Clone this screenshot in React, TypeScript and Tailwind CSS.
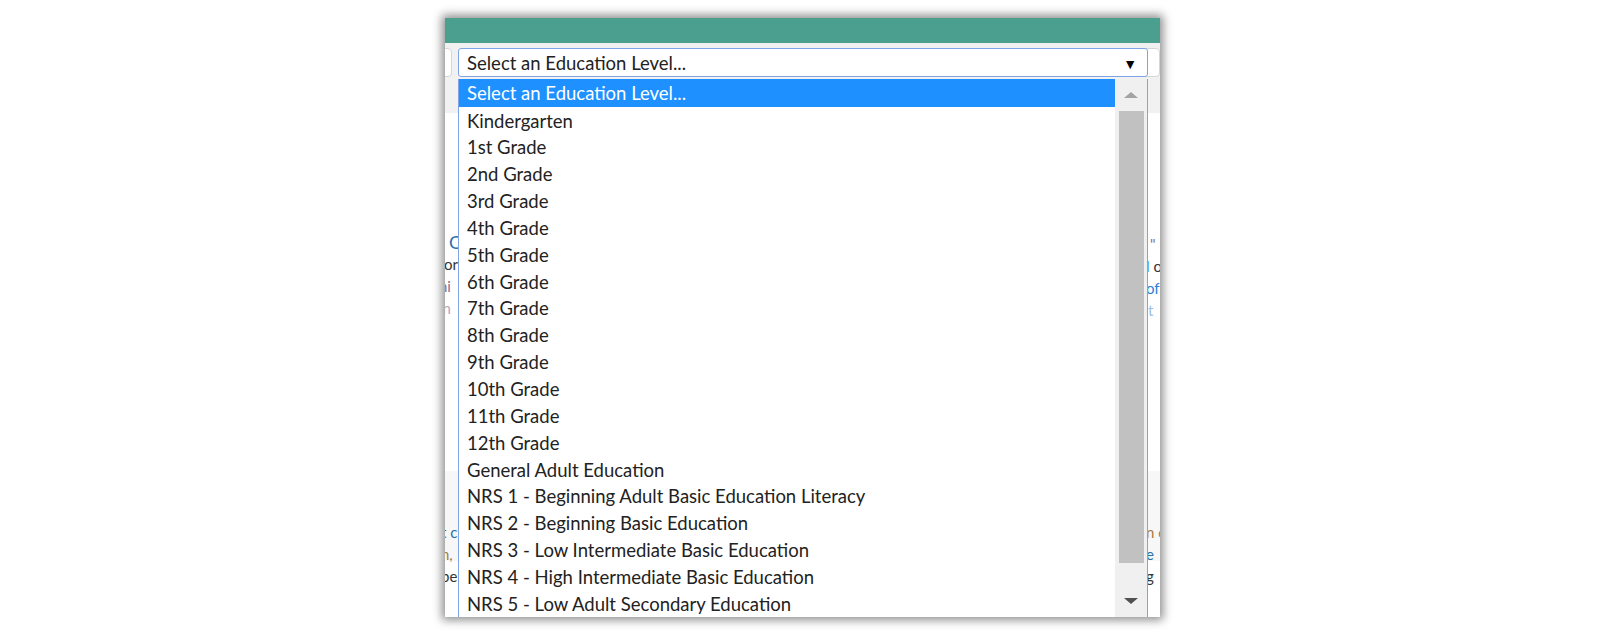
import React from 'react';

const levels = [
  'Kindergarten',
  '1st Grade',
  '2nd Grade',
  '3rd Grade',
  '4th Grade',
  '5th Grade',
  '6th Grade',
  '7th Grade',
  '8th Grade',
  '9th Grade',
  '10th Grade',
  '11th Grade',
  '12th Grade',
  'General Adult Education',
  'NRS 1 - Beginning Adult Basic Education Literacy',
  'NRS 2 - Beginning Basic Education',
  'NRS 3 - Low Intermediate Basic Education',
  'NRS 4 - High Intermediate Basic Education',
  'NRS 5 - Low Adult Secondary Education',
  'NRS 6 - High Adult Secondary Education',
];

export default function App() {
  return (
    <div className="w-[1611px] h-[633px] bg-white overflow-hidden font-['Lato','Open_Sans',sans-serif]">
      <div className="ml-[445px] pt-[18px]">
        <div className="relative w-[715px] h-[599px] bg-white overflow-hidden shadow-[0_0_9px_3px_rgba(0,0,0,0.45)]">
          {/* header */}
          <div className="h-[25px] bg-[#4a9f8f]" />

          {/* filter toolbar behind the dropdown */}
          <div className="h-[70px] bg-[#f1f1f1] pt-[5px] flex gap-[5px] -ml-[20px]">
            <div className="w-[28px] h-[29px] rounded-[4px] border border-[#d6d6d6] bg-white" />
            <div className="w-[690px] h-[29px]" />
            <div className="w-[40px] h-[29px] rounded-[4px] border border-[#d6d6d6] bg-white" />
          </div>

          {/* page text behind the dropdown */}
          <div className="flex justify-between text-[15px] leading-[22px] mt-[118px]">
            <div className="-ml-[6px] w-[20px] overflow-hidden whitespace-nowrap">
              <div className="text-[#2a6fa8] text-[18px] pl-[10px]">O</div>
              <div className="text-[#333]">for</div>
              <div className="text-[#8a6f8f]">hi</div>
              <div className="text-[#b9a5c0]">in</div>
            </div>
            <div className="w-[14px] overflow-hidden whitespace-nowrap pt-[2px]">
              <div className="text-[#8a6f8f] pl-[4px]">"</div>
              <div className="text-[#333]"><span className="text-[#2d7fd6]">l</span> o</div>
              <div className="text-[#2d7fd6]">of</div>
              <div className="text-[#9cc1e6] pl-[2px]">t</div>
            </div>
          </div>
          <div className="mt-[150px] h-[90px] bg-[#f7f7f7]" />
          <div className="flex justify-between text-[15px] leading-[22px] -mt-[40px]">
            <div className="-ml-[4px] w-[20px] overflow-hidden whitespace-nowrap">
              <div className="text-[#2a6fa8]">t c</div>
              <div className="text-[#a97a3d]">n,</div>
              <div className="text-[#333]">pe</div>
            </div>
            <div className="w-[14px] overflow-hidden whitespace-nowrap">
              <div className="text-[#a97a3d]">n c</div>
              <div className="text-[#2a6fa8]">e</div>
              <div className="text-[#333]">g</div>
            </div>
          </div>

          {/* select box */}
          <div className="absolute left-[13px] top-[30px] w-[690px] h-[29px] rounded-[3px] border border-[#7fa4e8] bg-white flex items-center justify-between pl-[8px] pr-[10px] pt-[2px] text-[18.5px] text-[#222]">
            <span>Select an Education Level...</span>
            <span className="text-[14px] text-black">▼</span>
          </div>

          {/* open list */}
          <div className="absolute left-[13px] top-[61px] w-[690px] h-[560px] bg-white border-x border-[#7fa4e8] flex">
            <div className="flex-1 overflow-hidden">
              <div className="h-[28px] pt-[2px] bg-[#1e90ff] text-white text-[18.5px] flex items-center pl-[8px]">
                Select an Education Level...
              </div>
              {levels.map((l) => (
                <div key={l} className="h-[26.85px] pt-[2px] text-[18.5px] text-[#222] flex items-center pl-[8px] whitespace-nowrap">
                  {l}
                </div>
              ))}
            </div>
            <div className="w-[32px] bg-[#f0f0f0] flex flex-col items-center">
              <div className="h-[32px] flex items-center justify-center">
                <div className="w-0 h-0 border-x-[7px] border-x-transparent border-b-[6px] border-b-[#a3a3a3]" />
              </div>
              <div className="w-[25px] h-[452px] bg-[#c1c1c1]" />
              <div className="h-[42px] flex items-end justify-center pb-[1px]">
                <div className="w-0 h-0 border-x-[7px] border-x-transparent border-t-[6px] border-t-[#505050]" />
              </div>
            </div>
          </div>
        </div>
      </div>
    </div>
  );
}
